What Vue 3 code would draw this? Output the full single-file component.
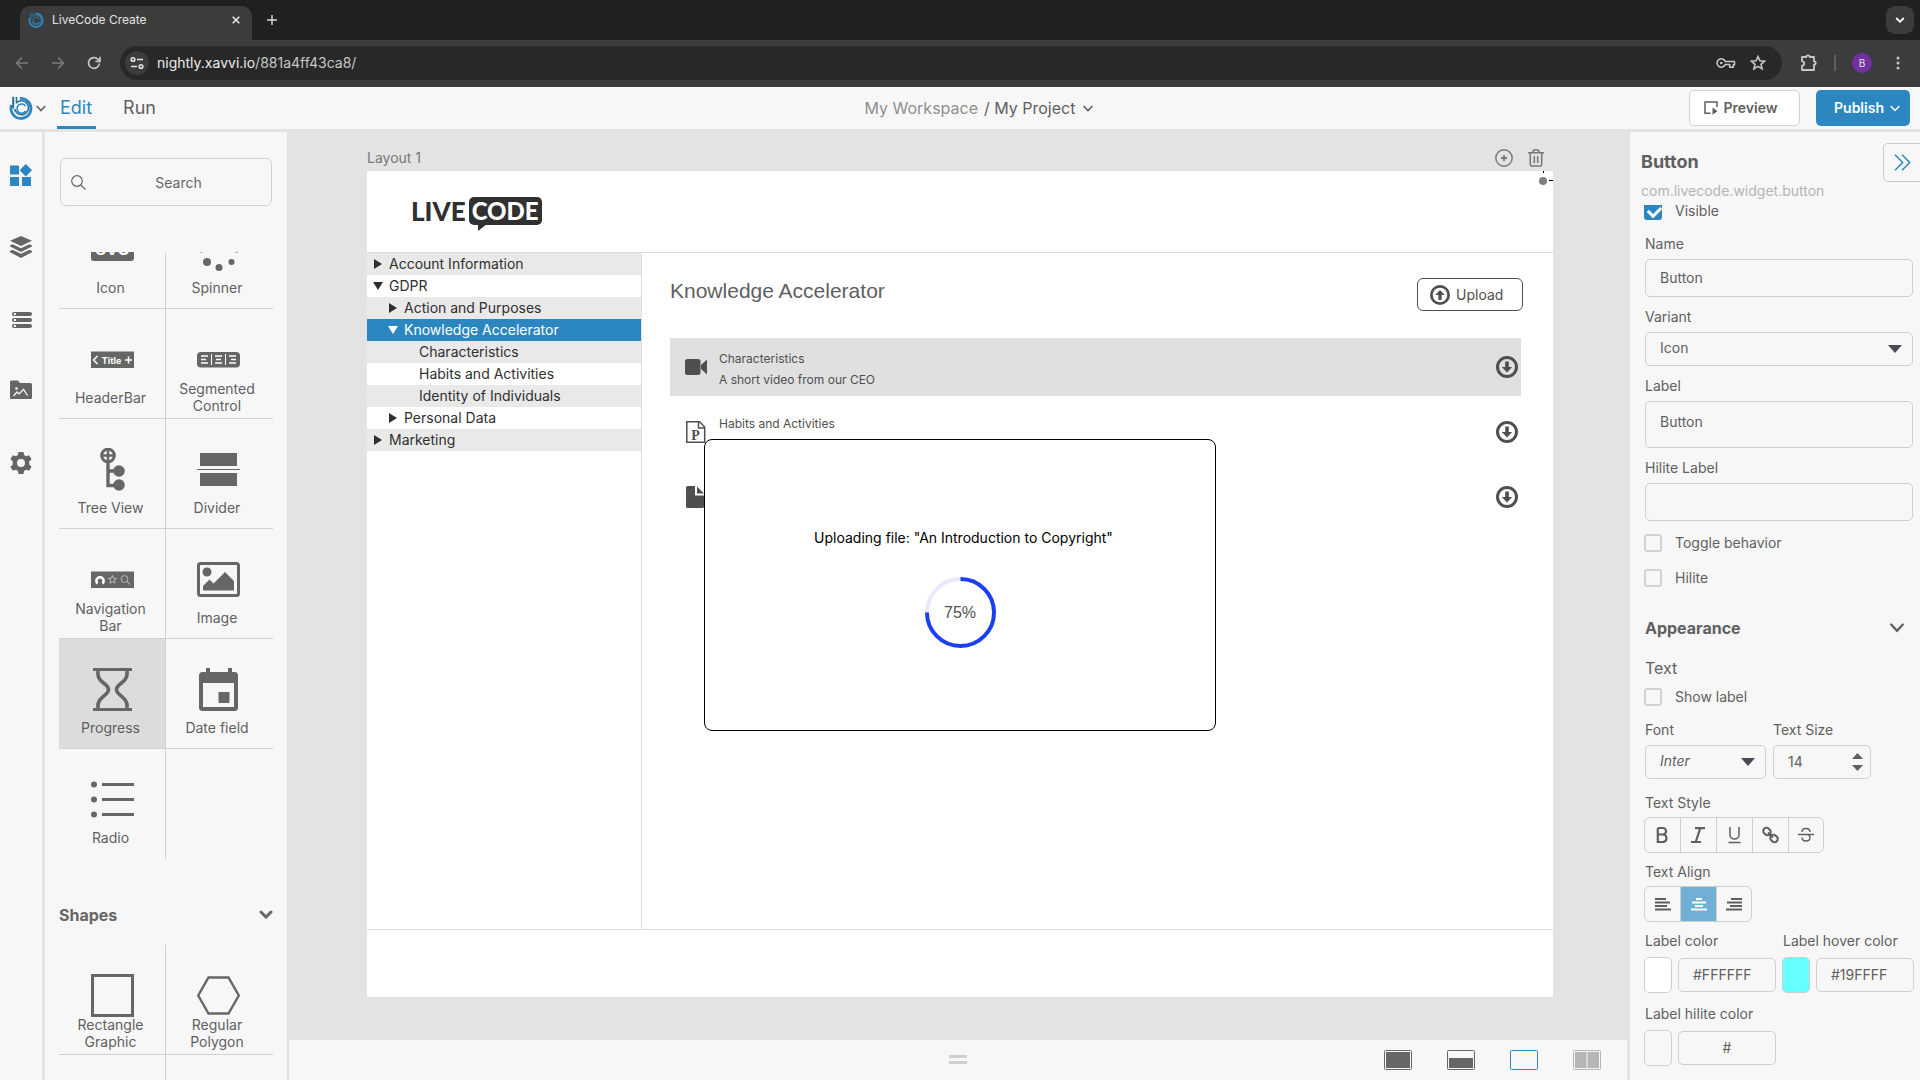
<template>
  <div class="window">
    <div class="tab-strip">
      <div class="tab">
        <svg class="favicon" viewBox="0 0 24 24" fill="none" v-html="logo"></svg>
        <span class="tab-title">LiveCode Create</span>
        <button class="bare" aria-label="Close tab">
          <svg width="8" height="8" viewBox="0 0 8 8" stroke="#e3e3e3" stroke-width="1.6"><path d="M.7.7l6.6 6.6M7.3.7L.7 7.3" /></svg>
        </button>
      </div>
      <button class="bare new-tab" aria-label="New tab">
        <svg width="10" height="10" viewBox="0 0 10 10" stroke="#d5d5d5" stroke-width="1.5"><path d="M5 0v10M0 5h10" /></svg>
      </button>
      <button class="bare tab-search" aria-label="Search tabs">
        <svg width="10" height="10" viewBox="0 0 10 10" fill="none" stroke="#fff" stroke-width="1.8"><path d="M1.2 3L5 6.8 8.8 3" /></svg>
      </button>
    </div>

    <div class="browser-bar">
      <button class="bare nav-btn" aria-label="Back">
        <svg width="14" height="14" viewBox="0 0 14 14" fill="none" stroke="#7d7d7d" stroke-width="1.6"><path d="M13 7H2M7 1.5L1.5 7 7 12.5" /></svg>
      </button>
      <button class="bare nav-btn" aria-label="Forward">
        <svg width="14" height="14" viewBox="0 0 14 14" fill="none" stroke="#7d7d7d" stroke-width="1.6"><path d="M1 7h11M7 1.5L12.5 7 7 12.5" /></svg>
      </button>
      <button class="bare nav-btn" aria-label="Reload">
        <svg width="14" height="14" viewBox="0 0 14 14" fill="none" stroke="#c7c7c7" stroke-width="1.7"><path d="M12.3 7.5A5.4 5.4 0 1 1 10.8 3.2L12.6 5M13 .8v4.6H8.4" /></svg>
      </button>
      <div class="url-box">
        <span class="site-info">
          <svg width="14" height="14" viewBox="0 0 14 14" fill="none" stroke="#e3e3e3" stroke-width="1.6"><circle cx="3" cy="3.5" r="1.8" /><path d="M7 3.5h6M1 10.5h6" /><circle cx="11" cy="10.5" r="1.8" /></svg>
        </span>
        <span class="url"><b>nightly.xavvi.io</b>/881a4ff43ca8/</span>
        <svg width="20" height="12" viewBox="0 0 20 12" fill="none" stroke="#c7c7c7" stroke-width="1.6"><path d="M9.2 4.5H18.5v3.2h-1.2v2.5h-3.6V7.5H9.2A4.2 4.2 0 1 1 9.2 4.5z" stroke-linejoin="round" /><circle cx="5.3" cy="6" r="1.3" fill="#c7c7c7" stroke="none" /></svg>
        <svg class="star" width="16" height="16" viewBox="0 0 16 16" fill="none" stroke="#c7c7c7" stroke-width="1.6"><path d="M8 1.5l1.9 4.3 4.7.4-3.6 3.1 1.1 4.6L8 11.4l-4.1 2.5L5 9.3 1.4 6.2l4.7-.4z" /></svg>
      </div>
      <svg class="puzzle" width="18" height="18" viewBox="0 0 18 18" fill="none" stroke="#c7c7c7" stroke-width="1.8"><path d="M2 3h4.3a1.7 1.7 0 0 1 3.4 0H14v4.3a1.7 1.7 0 0 1 0 3.4V16H2v-4.3a2.2 2.2 0 0 0 0-4.4z" stroke-linejoin="round" /></svg>
      <span class="bar-divider"></span>
      <span class="avatar">B</span>
      <svg class="dots" width="4" height="14" viewBox="0 0 4 14" fill="#c7c7c7"><circle cx="2" cy="2" r="1.5" /><circle cx="2" cy="7" r="1.5" /><circle cx="2" cy="12" r="1.5" /></svg>
    </div>

    <header class="app-bar">
      <button class="bare brand" aria-label="Main menu">
        <svg width="24" height="24" viewBox="0 0 24 24" fill="none" v-html="logo"></svg>
        <svg width="10" height="7" viewBox="0 0 10 7" fill="none" stroke="#666" stroke-width="1.8"><path d="M.8 1L5 5.5 9.2 1" /></svg>
      </button>
      <nav class="modes">
        <a href="#" class="mode active">Edit</a>
        <a href="#" class="mode">Run</a>
      </nav>
      <div class="crumbs">
        <span class="workspace">My Workspace</span>
        <span>/ My Project</span>
        <svg width="10" height="7" viewBox="0 0 10 7" fill="none" stroke="#5f5f5f" stroke-width="1.6"><path d="M.6 1L5 5.5 9.4 1" /></svg>
      </div>
      <button class="preview">
        <svg width="14" height="14" viewBox="0 0 14 14" fill="none" stroke="#5f5f5f" stroke-width="1.5"><path d="M6.5 12.3H1V1h12v5" /><path d="M8.5 6.5l5 3.8-5 3.5z" fill="#5f5f5f" stroke="none" /></svg>
        Preview
      </button>
      <button class="publish">
        Publish
        <svg width="10" height="7" viewBox="0 0 10 7" fill="none" stroke="#fff" stroke-width="1.4"><path d="M.6 1L5 5.5 9.4 1" /></svg>
      </button>
    </header>

    <div class="workspace-area">
      <aside class="rail">
        <button v-for="r in rail" :key="r.name" class="bare rail-btn" :aria-label="r.name">
          <svg width="22" height="22" viewBox="0 0 22 22" :fill="r.color" v-html="r.icon"></svg>
        </button>
      </aside>

      <aside class="palette">
        <div class="search">
          <svg width="15" height="15" viewBox="0 0 15 15" fill="none" stroke="#666" stroke-width="1.2"><circle cx="6" cy="6" r="5.3" /><path d="M10 10l4.5 4.5" /></svg>
          <input type="text" aria-label="Search widgets" placeholder="Search" />
        </div>
        <div class="palette-scroll">
          <div class="widgets scrolled">
            <div v-for="w in widgets" :key="w.name" class="widget" :class="{ selected: w.selected, last: w.last }">
              <svg v-if="w.icon" width="43" height="43" viewBox="0 0 43 43" :fill="G" v-html="w.icon"></svg>
              <span class="widget-label">{{ w.name }}</span>
            </div>
          </div>
          <button class="bare section">
            Shapes
            <svg width="14" height="9" viewBox="0 0 14 9" fill="none" stroke="#666" stroke-width="3" stroke-linecap="round"><path d="M2 2l5 5 5-5" /></svg>
          </button>
          <div class="widgets">
            <div v-for="(w, i) in shapes" :key="i" class="widget">
              <svg v-if="w.icon" width="43" height="43" viewBox="0 0 43 43" :fill="G" v-html="w.icon"></svg>
              <span class="widget-label">{{ w.name }}</span>
            </div>
          </div>
        </div>
      </aside>

      <main class="center">
        <div class="stage">
          <div class="stage-head">
            <span>Layout 1</span>
            <div class="stage-tools">
              <button class="bare" aria-label="Add layout">
                <svg width="18" height="18" viewBox="0 0 18 18" fill="none" stroke="#777" stroke-width="1.4"><circle cx="9" cy="9" r="8.2" /><path d="M9 6v6M6 9h6" stroke-width="1.8" /></svg>
              </button>
              <button class="bare" aria-label="Delete layout">
                <svg width="16" height="18" viewBox="0 0 16 18" fill="none" stroke="#777" stroke-width="1.5"><path d="M0 3.8h16M2.3 4v11.5a1.5 1.5 0 0 0 1.5 1.5h8.4a1.5 1.5 0 0 0 1.5-1.5V4M4.8 3.5C4.8 1 6 .8 8 .8s3.2.2 3.2 2.7M6.3 7v7M9.7 7v7" /></svg>
              </button>
            </div>
          </div>

          <div class="page">
            <svg class="anchor" width="14" height="15" viewBox="0 0 14 15"><circle cx="4" cy="10" r="4" fill="#808080" /><path d="M4.5 0v2M10 9.5h4" stroke="#000" /></svg>
            <div class="page-head">
              <div class="wordmark">
                <span>LIVE</span><span class="bubble">CODE</span>
              </div>
            </div>
            <div class="page-body">
              <ul class="tree">
                <li v-for="n in tree" :key="n.text + n.level" :class="['node', 'level-' + n.level, { current: n.current }]">
                  <svg v-if="n.state" width="10" height="10" viewBox="0 0 10 10" fill="currentColor"><path :d="n.state === 'open' ? 'M0 1h10L5 9z' : 'M1 0l8 5-8 5z'" /></svg>
                  {{ n.text }}
                </li>
              </ul>
              <section class="content">
                <div class="content-head">
                  <h1>Knowledge Accelerator</h1>
                  <button class="upload">
                    <svg width="20" height="20" viewBox="0 0 22 22" fill="none" stroke="#4f4f4f"><circle cx="11" cy="11" r="9.5" stroke-width="3" /><path d="M11 5.5L16.2 11h-3.4v5.5H9.2V11H5.8z" fill="#4f4f4f" stroke="none" /></svg>
                    Upload
                  </button>
                </div>
                <div v-for="f in files" :key="f.title" class="file" :class="{ hilite: f.note }">
                  <svg width="24" height="24" viewBox="0 0 24 24" v-html="f.icon"></svg>
                  <div class="file-text">
                    <p>{{ f.title }}</p>
                    <p>{{ f.note }}</p>
                  </div>
                  <button class="bare" aria-label="Download">
                    <svg width="22" height="22" viewBox="0 0 22 22" fill="none" stroke="#4f4f4f"><circle cx="11" cy="11" r="9.5" stroke-width="3" /><path d="M11 16.5L16.2 11h-3.4V5.5H9.2V11H5.8z" fill="#4f4f4f" stroke="none" /></svg>
                  </button>
                </div>
              </section>
            </div>
            <div class="page-foot"></div>

            <div class="dialog">
              <p>Uploading file: "An Introduction to Copyright"</p>
              <div class="progress">
                <svg width="71" height="71" viewBox="0 0 72 72" fill="none" stroke-width="4">
                  <circle cx="36" cy="36" r="34" stroke="#e9e9fd" />
                  <circle cx="36" cy="36" r="34" stroke="#1c3ff2" pathLength="100" :stroke-dasharray="percent + ' 100'" transform="rotate(-90 36 36)" />
                </svg>
                <span>{{ percent }}%</span>
              </div>
            </div>
          </div>
        </div>

        <div class="bottom-bar">
          <span class="grip"></span>
          <div class="views">
            <button v-for="v in views" :key="v.name" class="bare" :aria-label="v.name">
              <svg width="28" height="20" viewBox="0 0 28 20" v-html="v.icon"></svg>
            </button>
          </div>
        </div>
      </main>

      <aside class="inspector">
        <div class="inspector-head">
          <h2>Button</h2>
          <p>com.livecode.widget.button</p>
          <button class="collapse" aria-label="Collapse panel">
            <svg width="17" height="17" viewBox="0 0 17 17" fill="none" stroke="#2c87c0" stroke-width="1.5"><path d="M1 .8l7.7 7.7L1 16.2M8 .8l7.7 7.7L8 16.2" /></svg>
          </button>
        </div>
        <div class="inspector-body">
          <form class="props" @submit.prevent>
            <label class="check first"><input type="checkbox" checked />Visible</label>
            <div class="field">
              <label for="name">Name</label>
              <input id="name" class="box tall" type="text" value="Button" />
            </div>
            <div class="field">
              <label for="variant">Variant</label>
              <div class="select">
                <select id="variant" class="box"><option>Icon</option></select>
                <svg width="14" height="8" viewBox="0 0 14 8" fill="#4a4a55"><path d="M0 0h14L7 8z" /></svg>
              </div>
            </div>
            <div class="field">
              <label for="label">Label</label>
              <textarea id="label" v-model="labelText" class="box"></textarea>
            </div>
            <div class="field">
              <label for="hilite-label">Hilite Label</label>
              <input id="hilite-label" class="box tall" type="text" />
            </div>
            <label class="check"><input type="checkbox" />Toggle behavior</label>
            <label class="check"><input type="checkbox" />Hilite</label>

            <button type="button" class="bare group">
              Appearance
              <svg width="14" height="10" viewBox="0 0 14 10" fill="none" stroke="#5f5f5f" stroke-width="2.2" stroke-linecap="round"><path d="M1.2 1.5L7 7.8l5.8-6.3" /></svg>
            </button>
            <h3>Text</h3>
            <label class="check text-check"><input type="checkbox" />Show label</label>
            <div class="pair">
              <div class="field font">
                <label for="font">Font</label>
                <div class="select">
                  <select id="font" class="box italic"><option>Inter</option></select>
                  <svg width="14" height="8" viewBox="0 0 14 8" fill="#4a4a55"><path d="M0 0h14L7 8z" /></svg>
                </div>
              </div>
              <div class="field size">
                <label for="size">Text Size</label>
                <div class="select">
                  <input id="size" class="box" type="number" value="14" />
                  <svg class="spin" width="11" height="18" viewBox="0 0 11 18" fill="#5f5f5f"><path d="M0 6h11L5.5 0zM0 12h11l-5.5 6z" /></svg>
                </div>
              </div>
            </div>
            <span class="caption style-caption">Text Style</span>
            <div class="segments">
              <button v-for="s in textStyles" :key="s.name" type="button" :aria-label="s.name">
                <svg width="18" height="18" viewBox="0 0 18 18" fill="none" stroke="#5f5f5f" v-html="s.icon"></svg>
              </button>
            </div>
            <span class="caption">Text Align</span>
            <div class="segments">
              <button v-for="a in aligns" :key="a.name" type="button" :class="{ on: a.name === 'Center' }" :aria-label="a.name">
                <svg width="16" height="14" viewBox="0 0 16 14" stroke="currentColor" stroke-width="2"><path :d="a.d" /></svg>
              </button>
            </div>
            <div class="colors">
              <div v-for="c in colors" :key="c.id" class="color">
                <label :for="c.id">{{ c.label }}</label>
                <div class="color-row">
                  <button type="button" class="swatch" :style="{ background: c.fill }" :aria-label="c.label"></button>
                  <input :id="c.id" class="box" :class="{ blank: c.value === '#' }" type="text" :value="c.value" />
                </div>
              </div>
            </div>
          </form>
        </div>
      </aside>
    </div>
  </div>
</template>

<script setup>
import { ref } from 'vue';

const G = '#666';
const percent = ref(75);
const labelText = ref('Button');

// outer ring, then the two stems that curl into the inner rings
const logo = `
  <path d="M11 2.5A10 10 0 1 1 2.6 9" stroke="#2c87c0" stroke-width="2.8"/>
  <path d="M4.2 1v11.5" stroke="#2b6f99" stroke-width="2"/>
  <path d="M7.5 1v6.5M7.5 6.8A7 7 0 1 1 5.6 13" stroke="#2b7396" stroke-width="1.6"/>
  <path d="M16.500 10.200A4.600 4.600 0 1 0 16.500 15" stroke="#2c87c0" stroke-width="1.500"/>`;

const rail = [
  { name: 'Widgets', color: '#2c87c0', icon: '<path d="M0 1.5h9v9H0zM0 13h9v9H0zM12 13h9v9h-9zM15.8 0l6.2 6.2-6.2 6.2-6.2-6.2z"/>' },
  { name: 'Layers', color: G, icon: '<path d="M11 0l11 4.8L11 10 0 4.8zM0 9.5l2.5-1.2L11 12.3l8.5-4L22 9.5v1L11 16 0 10.5zM0 15l2.5-1.2L11 17.8l8.5-4L22 15v1.2L11 22 0 16.2z"/>' },
  { name: 'Data', color: G, icon: '<rect x="2" y="4" width="20" height="4" rx="2"/><rect x="2" y="10" width="20" height="4" rx="2"/><rect x="2" y="16" width="20" height="4" rx="2"/><g fill="#fff"><rect x="4" y="5" width="2" height="2"/><rect x="4" y="11" width="2" height="2"/><rect x="4" y="17" width="2" height="2"/></g>' },
  { name: 'Assets', color: G, icon: '<path d="M1.5.5H8L10 3h10.5A1.5 1.5 0 0 1 22 4.5v13a1.5 1.5 0 0 1-1.5 1.5h-19A1.5 1.5 0 0 1 0 17.5V2A1.5 1.5 0 0 1 1.5.5z"/><path d="M3.5 16L7 12l2 2 4.5-4.5 4 6" fill="none" stroke="#fff" stroke-width="1.2"/><circle cx="6.5" cy="8.5" r="1.3" fill="#fff"/>' },
  { name: 'Settings', color: G, icon: '<path fill-rule="evenodd" d="M8.5 0h5l.6 3 2 1.2 3-1L21.6 7.3l-2.3 2v3.4l2.3 2-2.5 4.1-3-1-2 1.2-.6 3h-5l-.6-3-2-1.2-3 1L.4 14.7l2.3-2V9.3l-2.3-2 2.5-4.1 3 1L7.9 3zM11 7a4 4 0 1 0 0 8 4 4 0 0 0 0-8z"/>' }
];

const widgets = [
  { name: 'Icon', icon: '<rect y="10" width="43" height="23" rx="3"/><text x="21.5" y="27" fill="#fff" font-family="Inter, sans-serif" font-size="16" font-weight="700" text-anchor="middle">SVG</text>' },
  { name: 'Spinner', icon: '<circle cx="4.5" cy="20" r="4.5"/><circle cx="10" cy="34" r="4"/><circle cx="22" cy="39.5" r="3.5"/><circle cx="34.5" cy="34" r="3"/><circle cx="39.5" cy="22" r="2.5"/>' },
  { name: 'HeaderBar', icon: '<path d="M0 13.5h43V30H0z"/><path d="M6.5 18l-4 4 4 4M34 22h7M37.5 18.5v7" fill="none" stroke="#fff" stroke-width="1.5"/><text x="20.5" y="25.5" fill="#fff" font-family="Inter, sans-serif" font-size="9" font-weight="700" text-anchor="middle">Title</text>' },
  { name: 'Segmented Control', icon: '<rect y="14" width="43" height="15.5" rx="4"/><path d="M4 18h7M4 21.5h5M4 25h7M18 18h7M19 21.5h5M18 25h7M32 18h7M34 21.5h5M32 25h7" stroke="#fff" stroke-width="1.4"/><path d="M14.5 16v11M28.5 16v11" stroke="#fff"/>' },
  { name: 'Tree View', icon: '<circle cx="17" cy="7.5" r="6.3" fill="none" stroke="#666" stroke-width="3"/><path d="M17 2.5v10M12 7.5h10" stroke="#666" stroke-width="2.6"/><path d="M17 14v23.5h11M17 23h11" fill="none" stroke="#666" stroke-width="3.4"/><circle cx="28" cy="23" r="5.8"/><circle cx="28" cy="37" r="5.8"/>' },
  { name: 'Divider', icon: '<path d="M3 5h37v13H3zM3 25h37v13H3zM0 21h43v1H0z"/>' },
  { name: 'Navigation Bar', icon: '<path d="M0 13.5h43V30H0z"/><path d="M6.5 25.5A3.6 3.6 0 1 1 11.5 25.5" fill="none" stroke="#fff" stroke-width="2.6"/><path d="M21.5 17.5l1.1 2.8 3 .1-2.4 1.9.9 2.9-2.6-1.7-2.6 1.7.9-2.9-2.4-1.9 3-.1z" fill="none" stroke="#ccc" stroke-width=".8"/><circle cx="33.5" cy="21" r="3.4" fill="none" stroke="#ccc" stroke-width=".8"/><path d="M36 23.5l3 3" stroke="#ccc"/>' },
  { name: 'Image', icon: '<rect x="1.5" y="5.5" width="40" height="32" rx="2" fill="none" stroke="#666" stroke-width="3"/><circle cx="10" cy="14" r="4.5"/><path d="M6 32.5V28l6.5-6.5 4 4L28 14l9 9v9.5z"/>' },
  { name: 'Progress', selected: true, icon: '<path d="M2 0h39v3H2zM2 40h39v3H2z"/><path d="M7 3c-1.5 12 10.5 12 10.5 18.5S5.5 29 7 40M36 3c1.5 12-10.5 12-10.5 18.5S37.5 29 36 40" fill="none" stroke="#666" stroke-width="3.6"/>' },
  { name: 'Date field', icon: '<path fill-rule="evenodd" d="M9 0h4v4h18V0h4v4h2.5A3.5 3.5 0 0 1 41 7.5v32a3.5 3.5 0 0 1-3.5 3.5h-32A3.5 3.5 0 0 1 2 39.5v-32A3.5 3.5 0 0 1 5.5 4H9zM6 15v24h31V15z"/><path d="M21.5 24h11v11h-11z"/>' },
  { name: 'Radio', last: true, icon: '<circle cx="3" cy="6.5" r="3"/><circle cx="3" cy="21.5" r="3"/><circle cx="3" cy="36.5" r="3"/><path d="M11 5h32v3H11zM11 20h32v3H11zM11 35h32v3H11z"/>' },
  { name: '', last: true }
];

const shapes = [
  { name: 'Rectangle Graphic', icon: '<rect x="1.5" y="1.5" width="40" height="40" fill="none" stroke="#666" stroke-width="3"/>' },
  { name: 'Regular Polygon', icon: '<path d="M11.5 3.5h20l10.3 18-10.3 18h-20L1.2 21.5z" fill="none" stroke="#666" stroke-width="2.4"/>' },
  { name: '' },
  { name: '' }
];

const tree = [
  { text: 'Account Information', level: 0, state: 'closed' },
  { text: 'GDPR', level: 0, state: 'open' },
  { text: 'Action and Purposes', level: 1, state: 'closed' },
  { text: 'Knowledge Accelerator', level: 1, state: 'open', current: true },
  { text: 'Characteristics', level: 2 },
  { text: 'Habits and Activities', level: 2 },
  { text: 'Identity of Individuals', level: 2 },
  { text: 'Personal Data', level: 1, state: 'closed' },
  { text: 'Marketing', level: 0, state: 'closed' }
];

const files = [
  { title: 'Characteristics', note: 'A short video from our CEO', icon: '<rect x="1" y="4" width="15.5" height="16" rx="2.5" fill="#4f4f4f"/><path d="M17 10l6-5.5v15L17 14z" fill="#4f4f4f"/>' },
  { title: 'Habits and Activities', note: '', icon: '<path d="M2.8 1.8h12.7l5.2 5.2v15.2H2.8zM14.5 2v6h6" fill="none" stroke="#4f4f4f" stroke-width="1.5"/><text x="11.5" y="19.5" fill="#4f4f4f" font-family="Liberation Serif, serif" font-size="14" font-weight="700" text-anchor="middle">P</text>' },
  { title: 'Identity of Individuals', note: '', icon: '<path d="M3.5 1H11v9.5h9V21.5A1.5 1.5 0 0 1 18.5 23h-15A1.5 1.5 0 0 1 2 21.5v-19A1.5 1.5 0 0 1 3.5 1zM13 1.5L20 8.5h-7z" fill="#4f4f4f"/>' }
];

const views = [
  { name: 'Full', icon: '<rect x=".5" y=".5" width="27" height="19" rx="1" fill="none" stroke="#666"/><path d="M2 2h24v16H2z" fill="#666"/>' },
  { name: 'Half', icon: '<rect x=".5" y=".5" width="27" height="19" rx="1" fill="none" stroke="#666"/><path d="M2 8h24v10H2z" fill="#666"/>' },
  { name: 'Empty', icon: '<rect x=".5" y=".5" width="27" height="19" rx="1" fill="none" stroke="#2c87c0"/>' },
  { name: 'Split', icon: '<rect x=".5" y=".5" width="27" height="19" rx="1" fill="none" stroke="#b5b5b5"/><path d="M2 2h11.5v16H2zM14.5 2H26v16H14.5z" fill="#b5b5b5"/>' }
];

const textStyles = [
  { name: 'Bold', icon: '<path d="M3.8 2v14h5.5a3.8 3.8 0 0 0 0-7.5H3.8M3.8 2h5a3.2 3.2 0 0 1 0 6.500" stroke-width="2.2"/>' },
  { name: 'Italic', icon: '<path d="M5 2.2h10M1 16h10M10.3 2.2L5.7 16" stroke-width="2.2"/>' },
  { name: 'Underline', icon: '<path d="M4 1v7.5a4.500 4.500 0 0 0 9 0V1M2.5 16.5h12" stroke-width="1.5"/>' },
  { name: 'Link', icon: '<rect x="-4" y="-3.2" width="8" height="6.4" rx="3.2" stroke-width="2" transform="translate(5 5.5) rotate(45)"/><rect x="-4" y="-3.2" width="8" height="6.4" rx="3.2" stroke-width="2" transform="translate(12 12.5) rotate(45)"/><path d="M6 6.5l5 5" stroke-width="2"/>' },
  { name: 'Strike', icon: '<path d="M1 8.5h16M13 6C13 4 11.5 2.5 9 2.5S5 4 5 6M5 11.5c0 2 1.5 3.5 4 3.5s4-1.5 4-3.5c0-1-.5-2-1.5-2.5" stroke-width="1.4"/>' }
];

const aligns = [
  { name: 'Left', d: 'M0 2h11M0 5.5h15M0 9h12M0 12.5h16' },
  { name: 'Center', d: 'M5 2h6M1 5.5h14M4 9h8M0 12.5h16' },
  { name: 'Right', d: 'M5 2h11M1 5.5h15M4 9h12M0 12.5h16' }
];

const colors = [
  { id: 'label-color', label: 'Label color', value: '#FFFFFF', fill: '#ffffff' },
  { id: 'label-hover', label: 'Label hover color', value: '#19FFFF', fill: '#66ffff' },
  { id: 'label-hilite', label: 'Label hilite color', value: '#', fill: 'transparent' }
];
</script>

<style>
body { background: #f7f7f7; }
</style>

<style scoped>
* { box-sizing: border-box; }
.window { display: flex; flex-direction: column; height: 100vh; overflow: hidden; font: 14px/20px Inter, "Liberation Sans", sans-serif; color: #5f5f5f; }
svg { flex: none; display: block; }
p, h1, h2, h3, ul { margin: 0; padding: 0; }
button, input, select, textarea { font: inherit; color: inherit; margin: 0; }
.bare { display: flex; align-items: center; padding: 0; border: 0; background: none; }

/* browser frame */
.tab-strip { display: flex; align-items: center; height: 40px; background: #1f2120; padding: 0 6px 0 20px; }
.tab { display: flex; align-items: center; align-self: flex-end; width: 232px; height: 34px; padding: 0 12px 6px 8px; border-radius: 10px 10px 0 0; background: #3c3c3c; }
.favicon { width: 16px; height: 16px; }
.tab-title { flex: 1; margin-left: 8px; font-size: 12px; color: #e3e3e3; }
.new-tab { margin-left: 15px; }
.tab-search { justify-content: center; width: 28px; height: 28px; margin-left: auto; border-radius: 9px; background: #3c3c3c; }
.browser-bar { display: flex; align-items: center; height: 47px; padding: 0 20px 2px 15px; background: #3c3c3c; }
.nav-btn { margin-right: 22px; }
.nav-btn:nth-child(3) { margin-right: 19px; }
.url-box { flex: 1; display: flex; align-items: center; height: 34px; padding: 0 16px 0 5px; border-radius: 17px; background: #282828; color: #c7c7c7; }
.site-info { display: grid; place-items: center; width: 24px; height: 24px; border-radius: 50%; background: #3c3c3c; }
.url { flex: 1; margin-left: 8px; }
.url b { font-weight: 400; color: #ececec; }
.star { margin-left: 14px; }
.puzzle { margin-left: 18px; }
.bar-divider { width: 2px; height: 16px; margin: 0 16px; background: #5e5e5e; }
.avatar { width: 20px; height: 20px; border-radius: 50%; background: #722fa0; color: #e3e3e3; font-size: 10px; text-align: center; }
.dots { margin-left: 24px; }

/* top bar */
.app-bar { display: flex; align-items: stretch; height: 45px; padding-right: 10px; border-bottom: 3px solid #e3e3e3; background: #f7f7f7; }
.brand { gap: 3px; margin-left: 9px; width: 48px; }
.modes { display: flex; gap: 24px; font-size: 18px; }
.mode { display: flex; align-items: center; padding: 0 4px 0 3px; border-bottom: 3px solid transparent; border-top: 3px solid transparent; color: #5f5f5f; text-decoration: none; }
.mode.active { color: #2c87c0; border-bottom-color: #2c87c0; }
.crumbs { flex: 1; display: flex; align-items: center; justify-content: center; gap: 6px; padding-left: 109px; font-size: 16px; }
.crumbs svg { margin-left: 2px; }
.workspace { color: #8f8f8f; }
.preview, .publish { display: flex; align-items: center; justify-content: center; gap: 6px; height: 36px; margin-top: 3px; border-radius: 5px; font-weight: 600; }
.preview { width: 111px; padding: 0 14px 0 6px; border: 1px solid #d2d2d2; background: #fff; }
.publish { width: 94px; margin-left: 16px; border: 0; background: #2c87c0; color: #fff; padding: 0 4px 0 12px; }

.workspace-area { flex: 1; display: flex; min-height: 0; background: #f7f7f7; }
.rail { width: 45px; padding-top: 7px; border-right: 3px solid #e3e3e3; }
.rail-btn { width: 42px; height: 72px; justify-content: center; }

/* widget palette */
.palette { display: flex; flex-direction: column; width: 242px; padding: 26px 14px 0; }
.search { flex: none; display: flex; align-items: center; height: 48px; margin: 0 1px; padding-left: 10px; border: 1px solid #d2d2d2; border-radius: 6px; }
.search input { flex: 1; min-width: 0; padding: 2px 0 0; border: 0; background: none; text-align: center; outline: 0; }
.search input::placeholder { color: #666; opacity: 1; }
.palette-scroll { flex: 1; min-height: 0; margin-top: 46px; overflow: hidden; }
.widgets { display: grid; grid-template-columns: 1fr 1fr; }
.widgets.scrolled { margin-top: -53px; }
.widget { display: flex; flex-direction: column; align-items: center; height: 110px; padding-top: 29px; border-bottom: 1px solid #d2d2d2; }
.widget:nth-child(odd) { border-right: 1px solid #d2d2d2; }
.widget:nth-child(even) { padding-right: 2px; }
.widget.selected { background: #dcdcdc; }
.widget.last { border-bottom: 0; }
.widget-label { display: flex; align-items: center; justify-content: center; width: 96px; height: 34px; padding: 0 3px 2px 0; line-height: 17px; text-align: center; }
.section { justify-content: space-between; align-items: flex-start; width: 100%; height: 86px; padding-top: 46px; font-size: 16px; font-weight: 700; color: #666; }
.section svg { margin-top: 5px; }

/* canvas */
.center { flex: 1; min-width: 0; display: flex; flex-direction: column; background: #e3e3e3; }
.stage { flex: 1; min-height: 0; display: flex; flex-direction: column; padding: 14px 77px 43px 80px; }
.stage-head { flex: none; display: flex; align-items: center; justify-content: space-between; height: 25px; padding-bottom: 1px; color: #777; }
.stage-tools { display: flex; gap: 15px; margin-right: 9px; }
.page { position: relative; flex: 1; display: flex; flex-direction: column; background: #fff; }
.anchor { position: absolute; top: 0; right: 0; }
.page-head { flex: none; height: 82px; padding: 26px 44px; border-bottom: 1px solid #dedede; }
.wordmark { display: flex; align-items: center; font: 900 26px/28px Lato, sans-serif; color: #303030; }
.bubble { position: relative; margin-left: 3px; padding: 0 3px; border-radius: 5px; background: #303030; color: #fff; font-size: 24px; }
.bubble::after { content: ""; position: absolute; left: 9px; top: 27px; border-left: 9px solid #303030; border-bottom: 7px solid transparent; border-right: 3px solid transparent; }
.page-body { flex: 1; display: flex; min-height: 0; }
.tree { width: 275px; border-right: 1px solid #dedede; list-style: none; }
.node { display: flex; align-items: center; gap: 6px; height: 22px; padding-left: 6px; color: #2f2f2f; }
.node:nth-child(odd) { background: #e9e9e9; }
.level-1 { padding-left: 21px; }
.level-2 { padding-left: 52px; }
.node.current { background: #2c87c0; color: #fff; }
.content { flex: 1; padding: 25px 32px 0 28px; color: #4f4f4f; }
.content-head { display: flex; justify-content: space-between; height: 60px; margin-right: -2px; }
h1 { font: 400 21px/26px "Liberation Sans", sans-serif; color: #5f5f5f; }
.upload { display: flex; align-items: center; gap: 6px; width: 106px; height: 33px; padding: 0 0 0 12px; border: 1px solid #4f4f4f; border-radius: 6px; background: #fff; }
.file { display: flex; align-items: center; gap: 11px; height: 58px; margin-bottom: 7px; padding: 0 3px 0 14px; font-size: 12px; line-height: 21px; }
.file.hilite { background: #e0e0e0; }
.file-text { flex: 1; padding-top: 4px; }
.file-text p { height: 21px; }
.page-foot { flex: none; height: 68px; border-top: 1px solid #dedede; }
.dialog { position: absolute; top: 268px; left: 50%; width: 512px; height: 292px; margin-left: -256px; display: flex; flex-direction: column; align-items: center; padding-top: 88px; border: 1px solid #000; border-radius: 8px; background: #fff; color: #000; }
.dialog p { padding-left: 7px; }
.progress { display: grid; place-items: center; margin-top: 29px; font: 16px/20px "Liberation Sans", sans-serif; color: #4f4f4f; }
.progress > * { grid-area: 1 / 1; }
.bottom-bar { flex: none; display: flex; justify-content: space-between; height: 40px; margin: 0 3px 0 2px; padding: 10px 26px 0; background: #f7f7f7; }
.bottom-bar::before { content: ""; width: 217px; }
.grip { height: 9px; width: 18px; margin-top: 5px; border: solid #cfcfcf; border-width: 3px 0; }
.views { display: flex; align-items: flex-start; gap: 35px; }

/* property inspector */
.inspector { flex: none; display: flex; flex-direction: column; width: 290px; }
.inspector-head { position: relative; flex: none; height: 73px; padding: 18px 11px 0; }
h2 { font-size: 18px; line-height: 24px; font-weight: 700; }
.inspector-head p { margin-top: 7px; color: #b4b4b4; }
.collapse { position: absolute; top: 11px; right: -1px; display: grid; place-items: center; width: 38px; height: 39px; padding: 0; border: 1px solid #c9c9c9; border-radius: 5px 0 0 5px; background: #f7f7f7; }
.inspector-body { flex: 1; min-height: 0; overflow: hidden; }
.props { display: flex; flex-direction: column; padding: 0 6px 0 14px; }
.check { display: flex; align-items: center; gap: 13px; height: 26px; margin-top: 9px; }
.check.first { margin-top: -7px; }
.check input { appearance: none; position: relative; flex: none; width: 18px; height: 18px; border: 2px solid #d2d2d2; border-radius: 3px; }
.check input:checked { border-color: #2c87c0; background: #2c87c0; }
.check input:checked::before { content: ""; position: absolute; left: 4px; top: 0; width: 6px; height: 10px; border: solid #fff; border-width: 0 3px 3px 0; transform: rotate(45deg); }
.field { display: flex; flex-direction: column; gap: 5px; margin: 10px 1px 0; }
.box { width: 100%; height: 34px; padding: 0 14px 2px; border: 1px solid #cfcfcf; border-radius: 5px; background: none; outline: 0; appearance: none; }
.box.tall { height: 38px; }
textarea.box { display: block; height: 47px; padding-top: 10px; resize: none; overflow: hidden; }
.box.italic { font-style: italic; }
.select { position: relative; }
.select svg { position: absolute; right: 11px; top: 13px; }
.select .spin { right: 8px; top: 8px; }
input[type="number"]::-webkit-inner-spin-button { display: none; }
.group { justify-content: space-between; height: 24px; margin-top: 25px; padding: 0 10px 0 1px; font-size: 16px; font-weight: 700; }
h3 { margin: 16px 1px 0; font-size: 16px; line-height: 24px; font-weight: 400; }
.text-check { margin-top: 4px; }
.pair { display: flex; gap: 5px; }
.pair .font { width: 121px; }
.pair .size { width: 98px; }
.caption { margin: 9px 1px 4px; }
.style-caption { margin-top: 14px; }
.segments { align-self: flex-start; display: flex; border: 1px solid #cfcfcf; border-radius: 6px; overflow: hidden; }
.segments button { display: grid; place-items: center; width: 36px; height: 34px; padding: 0; border: 0; border-right: 1px solid #cfcfcf; background: none; }
.segments button:last-child { width: 34px; border-right: 0; }
.segments .on { background: #71b0d5; color: #fff; }
.colors { display: grid; grid-template-columns: 1fr 1fr; column-gap: 6px; row-gap: 11px; margin-top: 9px; }
.color label { display: block; padding-left: 1px; margin-bottom: 6px; white-space: nowrap; }
.color-row { display: flex; align-items: center; gap: 6px; }
.color-row .box { flex: 1; min-width: 0; }
.box.blank { text-align: center; }
.swatch { flex: none; width: 28px; height: 36px; padding: 0; border: 1px solid #cfcfcf; border-radius: 5px; }
</style>
